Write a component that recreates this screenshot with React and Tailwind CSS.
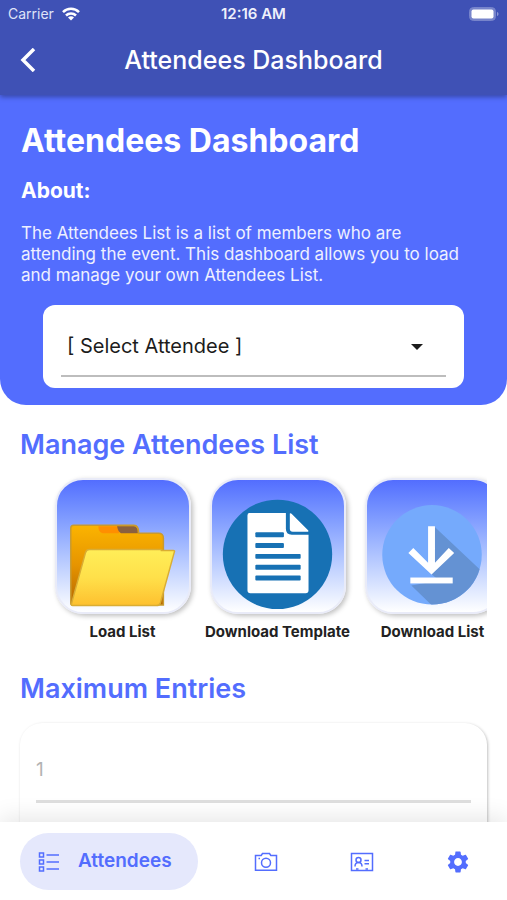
import React from "react";
import { MdSettings } from "react-icons/md";

function WifiIcon() {
  return (
    <svg width="18" height="14" viewBox="0 0 18 14" aria-hidden="true">
      <g fill="none" stroke="#fff" strokeWidth="2.5">
        <path d="M1 5.2C5.4.7 12.6.7 17 5.2" />
        <path d="M4 8.5c2.8-2.8 7.2-2.8 10 0" />
      </g>
      <path d="M9 13.6 6 10.5c1.7-1.6 4.3-1.6 6 0Z" fill="#fff" />
    </svg>
  );
}

function BatteryIcon() {
  return (
    <svg width="30" height="14" viewBox="0 0 30 14" aria-hidden="true">
      <rect x="0.5" y="0.5" width="26" height="13" rx="4" fill="#7784cb" stroke="#7784cb" />
      <rect x="2.5" y="2.5" width="22" height="9" rx="2" fill="#fff" />
      <path d="M28 5c2 .6 2 3.400 0 4Z" fill="#8b96d3" />
    </svg>
  );
}

function FolderArt() {
  return (
    <svg className="h-full w-full" viewBox="0 0 134 134" aria-hidden="true">
      <defs>
        <linearGradient id="folderBack" x1="0" y1="0" x2="0" y2="1">
          <stop offset="0" stopColor="#fbb400" />
          <stop offset="0.5" stopColor="#e69400" />
          <stop offset="1" stopColor="#b56700" />
        </linearGradient>
        <linearGradient id="folderFront" x1="0" y1="0" x2="0" y2="1">
          <stop offset="0" stopColor="#ffee58" />
          <stop offset="0.5" stopColor="#ffe04a" />
          <stop offset="1" stopColor="#fdc02f" />
        </linearGradient>
      </defs>
      <path d="M14 49q0-3 3-3h61q5 0 5 8h20q5 0 5 5v68H16q-2 0-2-2Z" fill="url(#folderBack)" stroke="#c99a2e" strokeWidth="1.500" />
      <path d="M42 47h21v7H46q-4-1-4-7Z" fill="#ff8f00" />
      <path d="M61 47h17q4 0 4 7H65q-3-1-4-7Z" fill="#8a603f" />
      <path d="M33 70.500h72q1 0 1 1h12q2 0 1 2l-14 51q-1 3-4 3H16q-2 0-1-3l14-51q1-3 4-3Z" fill="url(#folderFront)" stroke="#d9ad34" strokeWidth="1.500" />
    </svg>
  );
}

function DocumentArt() {
  return (
    <svg className="h-full w-full" viewBox="0 0 134 134" aria-hidden="true">
      <circle cx="66.500" cy="75.500" r="55.500" fill="#1771b4" />
      <path d="M38 33.500h37v16q0 6 6 6h17V112q0 3-3 3H39q-3 0-3-3V36q0-2.500 2-2.500Z" fill="#fff" />
      <path d="M79 34q1-.5 2 .5l16.500 16.500q1 1 0 1.500H82q-3 0-3-3Z" fill="#fff" />
      <g fill="#1771b4">
        <rect x="44" y="53" width="29" height="5" rx="1" />
        <rect x="44" y="64" width="29" height="5" rx="1" />
        <rect x="44" y="75" width="46" height="5" rx="1" />
        <rect x="44" y="86" width="46" height="5" rx="1" />
        <rect x="44" y="97" width="46" height="5" rx="1" />
      </g>
    </svg>
  );
}

function DownloadArt() {
  return (
    <svg className="h-full w-full" viewBox="0 0 134 134" aria-hidden="true">
      <defs>
        <clipPath id="downloadDisc">
          <circle cx="66" cy="76" r="50.500" />
        </clipPath>
      </defs>
      <circle cx="66" cy="76" r="50.500" fill="#75aafc" />
      <path d="m68 47 66 62v32H80L45 107l28-5-7-6Z" fill="#6492d3" clipPath="url(#downloadDisc)" />
      <path d="M62 47h7v37l14-15 5.500 5L65.500 96 42 74l5-5 15 15Z" fill="#fff" />
      <rect x="44" y="99" width="43" height="6" fill="#fff" />
    </svg>
  );
}

function ListIcon() {
  return (
    <svg width="22" height="22" viewBox="0 0 22 22" fill="none" stroke="currentColor" strokeWidth="1.500" aria-hidden="true">
      <rect x="1.500" y="2" width="4" height="4" />
      <rect x="1.500" y="9" width="4" height="4" />
      <rect x="1.500" y="16" width="4" height="4" />
      <path d="M8.500 4H21M8.500 11H21M8.500 18H21" />
    </svg>
  );
}

function CameraIcon() {
  return (
    <svg width="24" height="24" viewBox="0 0 24 24" fill="none" stroke="currentColor" strokeWidth="1.500" aria-hidden="true">
      <path d="M1.500 5.500h5.700l1.300-2h7l1.300 2h5.700v14.800H1.500Z" />
      <circle cx="12" cy="12.800" r="4.500" />
      <path d="M4.500 8.500H6" />
    </svg>
  );
}

function IdCardIcon() {
  return (
    <svg width="24" height="24" viewBox="0 0 24 24" fill="none" stroke="currentColor" strokeWidth="1.500" aria-hidden="true">
      <path d="M1.500 3.500h21v17H1.500Z" />
      <circle cx="8.500" cy="10" r="2.500" />
      <path d="M5 16.500q0-4 3.500-4t3.500 4M14.500 10.500H19M14.500 13.800H19" />
      <path d="M6 19h2.500M15.500 19H18" />
    </svg>
  );
}

const actions = [
  { label: "Load List", Art: FolderArt },
  { label: "Download Template", Art: DocumentArt },
  { label: "Download List", Art: DownloadArt },
];

const navItems = [
  { label: "Camera", icon: <CameraIcon /> },
  { label: "Badges", icon: <IdCardIcon /> },
  { label: "Settings", icon: <MdSettings size={26} /> },
];

export default function App() {
  return (
    <div className="flex h-screen flex-col overflow-hidden bg-white font-['Inter','Liberation_Sans',sans-serif] text-[#536dfe]">
      <header className="relative z-10 bg-[#3f51b5] text-white shadow-[0_2px_5px_rgba(0,0,0,0.35)]">
        <div className="grid h-7 grid-cols-3 items-center px-2 text-[14px] leading-5">
          <div className="flex items-center gap-2 text-[#dfe3f8]">
            Carrier
            <WifiIcon />
          </div>
          <div className="text-center text-[15px] font-semibold text-[#eef0fb]">12:16 AM</div>
          <div className="flex justify-end">
            <BatteryIcon />
          </div>
        </div>
        <div className="grid h-[67px] grid-cols-[56px_1fr_56px] items-start pt-4">
          <button type="button" aria-label="Back" className="flex h-8 items-center pl-5">
            <svg width="16" height="24" viewBox="0 0 16 24" fill="none" stroke="currentColor" strokeWidth="3.500" aria-hidden="true">
              <path d="M14 1 3 12l11 11" />
            </svg>
          </button>
          <div className="text-center text-[25px] leading-8 font-medium">Attendees Dashboard</div>
        </div>
      </header>

      <main className="min-h-0 flex-1 overflow-y-auto [scrollbar-width:none]">
        <section className="rounded-b-[26px] bg-[#536dfe] px-[21px] pt-[26px] pb-[17px] text-white">
          <h1 className="text-[32px] leading-10 font-bold">Attendees Dashboard</h1>
          <h2 className="mt-4 text-[21px] leading-7 font-bold">About:</h2>
          <p className="mt-[18px] pr-[18px] text-[17px] leading-[21px] text-[#eef0ff]">
            The Attendees List is a list of members who are attending the event. This dashboard allows you to load and manage your own Attendees List.
          </p>
          <div className="mx-[22px] mt-[19px] h-[83px] rounded-xl bg-white px-[18px] pt-3">
            <div className="relative border-b-2 border-[#bdbdbd]">
              <select aria-label="Select attendee" className="h-[58px] w-full appearance-none bg-transparent px-[6px] text-[20px] text-[#1c1c1c] outline-none">
                <option>[ Select Attendee ]</option>
              </select>
              <svg className="pointer-events-none absolute top-[27px] right-[23px]" width="12" height="6" viewBox="0 0 12 6" aria-hidden="true">
                <path d="M0 0h12L6 6Z" fill="#1c1c1c" />
              </svg>
            </div>
          </div>
        </section>

        <section className="px-5 pt-6">
          <h2 className="text-[27px] leading-8 font-semibold">Manage Attendees List</h2>
          <div className="mt-3 flex overflow-hidden pt-[5px] pb-2 pl-[25px]">
            {actions.map(({ label, Art }) => (
              <button key={label} type="button" className="flex w-[155px] shrink-0 flex-col items-center">
                <span className="block size-[136px] overflow-hidden rounded-[28px] border-2 border-[#e9ebf8] bg-linear-to-b from-[#536dfe] to-white shadow-[2px_2px_5px_rgba(0,0,0,0.25)]">
                  <Art />
                </span>
                <span className="mt-2 text-[15px] leading-5 font-bold whitespace-nowrap text-[#222]">{label}</span>
              </button>
            ))}
          </div>
        </section>

        <section className="px-5 pt-[23px] pb-6">
          <h2 id="max-entries" className="text-[27px] leading-8 font-semibold">Maximum Entries</h2>
          <div className="mt-[18px] rounded-[22px] bg-white px-4 pt-6 pb-10 shadow-[1px_1px_3px_rgba(0,0,0,0.25)]">
            <input
              type="number"
              placeholder="1"
              aria-labelledby="max-entries"
              className="h-14 w-full border-b-[3px] border-[#dedede] bg-transparent pb-2 text-[19px] outline-none placeholder:text-[#b3b3b3]"
            />
          </div>
        </section>
      </main>

      <nav className="relative z-10 flex h-[78px] items-start justify-between bg-white px-5 pt-[11px] shadow-[0_-4px_22px_rgba(0,0,0,0.1)]">
        <button type="button" aria-current="page" className="flex h-[57px] w-[178px] items-center gap-[18px] rounded-full bg-[#e5e8fc] pl-[18px] text-[19px] font-semibold">
          <ListIcon />
          Attendees
        </button>
        {navItems.map(({ label, icon }) => (
          <button key={label} type="button" aria-label={label} className="flex h-[57px] w-[57px] items-center justify-center">
            {icon}
          </button>
        ))}
      </nav>
    </div>
  );
}
